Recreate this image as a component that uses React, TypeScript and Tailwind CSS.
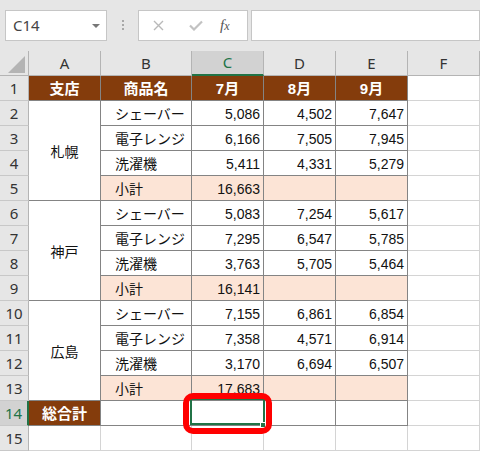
import React from 'react';

type Group = {
  branch: string;
  rows: string[][];
  total: string;
};

const groups: Group[] = [
  {
    branch: '札幌',
    rows: [
      ['シェーバー', '5,086', '4,502', '7,647'],
      ['電子レンジ', '6,166', '7,505', '7,945'],
      ['洗濯機', '5,411', '4,331', '5,279'],
    ],
    total: '16,663',
  },
  {
    branch: '神戸',
    rows: [
      ['シェーバー', '5,083', '7,254', '5,617'],
      ['電子レンジ', '7,295', '6,547', '5,785'],
      ['洗濯機', '3,763', '5,705', '5,464'],
    ],
    total: '16,141',
  },
  {
    branch: '広島',
    rows: [
      ['シェーバー', '7,155', '6,861', '6,854'],
      ['電子レンジ', '7,358', '4,571', '6,914'],
      ['洗濯機', '3,170', '6,694', '6,507'],
    ],
    total: '17,683',
  },
];

const cellFont = "font-['Liberation_Sans','Noto_Sans_CJK_JP',sans-serif] text-[14px] text-[#111]";
const hdrFont = "font-['Noto_Sans',sans-serif] text-[15px]";

const RowHead: React.FC<{ n: number; active?: boolean }> = ({ n, active }) => (
  <div
    className={
      active
        ? `flex items-center justify-center bg-[#d2d2d2] border-b border-b-[#c8c8c8] border-r-2 border-r-[#217346] text-[#217346] pt-[1px] ${hdrFont}`
        : `flex items-center justify-center bg-[#e6e6e6] border-b border-r border-b-[#c8c8c8] border-r-[#b4b4b4] text-[#333] pt-[1px] ${hdrFont}`
    }
  >
    {n}
  </div>
);

const Cell: React.FC<{ children?: React.ReactNode; className?: string }> = ({ children, className = '' }) => (
  <div className={`flex items-center pt-[3px] border-r border-b border-[#848484] ${cellFont} ${className}`}>
    {children}
  </div>
);

const Blank: React.FC = () => <div className="border-r border-b border-[#d4d4d4] bg-white" />;

const App: React.FC = () => {
  let rowNo = 1;

  return (
    <div className="w-[480px] h-[451px] overflow-hidden bg-white">
      {/* formula bar */}
      <div className="h-[51px] bg-[#e6e6e6] flex items-start pt-[10px] pl-[5px]">
        <div className={`w-[102px] h-[31px] bg-white border border-[#c6c6c6] flex items-center justify-between pl-[7px] pr-[6px] text-[#444] ${hdrFont}`}>
          <span>C14</span>
          <span className="w-0 h-0 border-l-[4px] border-r-[4px] border-t-[4px] border-l-transparent border-r-transparent border-t-[#777]" />
        </div>
        <div className="ml-[15px] mt-[10px] flex flex-col gap-[2px]">
          <span className="w-[2px] h-[2px] bg-[#a8a8a8]" />
          <span className="w-[2px] h-[2px] bg-[#a8a8a8]" />
          <span className="w-[2px] h-[2px] bg-[#a8a8a8]" />
        </div>
        <div className="ml-[14px] w-[110px] h-[31px] bg-white border border-[#c6c6c6] flex items-center">
          <svg className="ml-[14px]" width="11" height="11" viewBox="0 0 11 11">
            <path d="M1 1 L10 10 M10 1 L1 10" stroke="#b9b9b9" strokeWidth="1.4" fill="none" />
          </svg>
          <svg className="ml-[25px]" width="14" height="11" viewBox="0 0 14 11">
            <path d="M1 5.5 L5 9.5 L13 1.5" stroke="#c2c2c2" strokeWidth="2.2" fill="none" />
          </svg>
          <span className="ml-[17px] italic font-['Liberation_Serif',serif] text-[15px] text-[#555] leading-none">
            f<span className="text-[12px]">x</span>
          </span>
        </div>
        <div className="ml-[3px] flex-1 h-[31px] bg-white border border-[#c6c6c6]" />
      </div>

      {/* sheet */}
      <div className="grid grid-cols-[29px_72px_91px_72px_72px_72px_1fr] grid-rows-[25px_repeat(15,25px)]">
        {/* column headers */}
        <div className="flex items-end justify-end pr-[3px] pb-[2px] bg-[#e6e6e6] border-r border-b border-[#b4b4b4]">
          <svg width="17" height="17" viewBox="0 0 17 17">
            <polygon points="17,0 17,17 0,17" fill="#b4b4b4" />
          </svg>
        </div>
        {['A', 'B', 'C', 'D', 'E', 'F'].map((c) =>
          c === 'C' ? (
            <div
              key={c}
              className={`flex items-center justify-center bg-[#d2d2d2] border-r border-r-[#b4b4b4] border-b-2 border-b-[#217346] text-[#217346] ${hdrFont}`}
            >
              {c}
            </div>
          ) : (
            <div
              key={c}
              className={`flex items-center justify-center bg-[#e6e6e6] border-r border-b border-[#b4b4b4] text-[#333] ${hdrFont}`}
            >
              {c}
            </div>
          )
        )}

        {/* row 1 */}
        <RowHead n={rowNo++} />
        {['支店', '商品名', '7月', '8月', '9月'].map((h) => (
          <Cell key={h} className="justify-center bg-[#843c0c] !text-white font-bold !text-[15px]">
            {h}
          </Cell>
        ))}
        <Blank />

        {groups.map((g) => (
          <React.Fragment key={g.branch}>
            <RowHead n={rowNo++} />
            <Cell className="row-span-4 justify-center bg-white">{g.branch}</Cell>
            {g.rows.map((r, i) => (
              <React.Fragment key={r[0]}>
                {i > 0 && <RowHead n={rowNo++} />}
                <Cell className="pl-[14px] bg-white">{r[0]}</Cell>
                <Cell className="justify-end pr-[3px] bg-white">{r[1]}</Cell>
                <Cell className="justify-end pr-[3px] bg-white">{r[2]}</Cell>
                <Cell className="justify-end pr-[3px] bg-white">{r[3]}</Cell>
                <Blank />
              </React.Fragment>
            ))}
            <RowHead n={rowNo++} />
            <Cell className="pl-[14px] bg-[#fce4d6]">小計</Cell>
            <Cell className="justify-end pr-[3px] bg-[#fce4d6]">{g.total}</Cell>
            <Cell className="bg-[#fce4d6]" />
            <Cell className="bg-[#fce4d6]" />
            <Blank />
          </React.Fragment>
        ))}

        {/* row 14 */}
        <RowHead n={14} active />
        <Cell className="justify-center bg-[#843c0c] !text-white font-bold !text-[15px]">総合計</Cell>
        <Cell className="bg-white" />
        <Cell className="relative bg-white">
          <div className="absolute -left-[2px] -top-[3px] w-[75px] h-[27px] border-2 border-[#217346]" />
          <div className="absolute right-[-3px] bottom-[-3px] w-[6px] h-[6px] bg-[#217346] border border-white" />
          <div className="absolute -left-[9px] -top-[8px] w-[89px] h-[41px] border-[6px] border-[#ff0000] rounded-[10px]" />
        </Cell>
        <Cell className="bg-white" />
        <Cell className="bg-white" />
        <Blank />

        {/* row 15 */}
        <RowHead n={15} />
        <Blank />
        <Blank />
        <Blank />
        <Blank />
        <Blank />
        <Blank />
      </div>
    </div>
  );
};

export default App;
